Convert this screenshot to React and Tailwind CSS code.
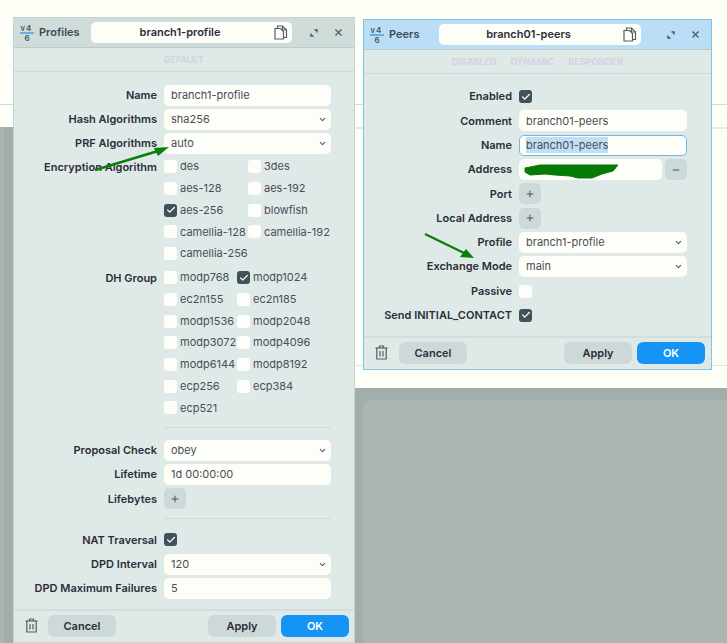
import { ChevronDown, X, Plus, Minus, Check } from 'lucide-react'
import clsx from 'clsx'

const LABEL_W = {
  profiles: 'w-[143px]',
  peers: 'w-[148px]',
}

function VersionIcon() {
  return (
    <svg width="14" height="18" viewBox="0 0 14 18" className="shrink-0">
      <text x="0.5" y="7" fontSize="7.5" fontWeight="600" fontFamily="Inter" fill="#46565c">v</text>
      <text x="6" y="6.5" fontSize="8" fontWeight="600" fontFamily="Inter" fill="#46565c">4</text>
      <line x1="0" y1="9" x2="14" y2="9" stroke="#3d9be0" strokeWidth="1.4" />
      <text x="4.5" y="17" fontSize="8" fontWeight="600" fontFamily="Inter" fill="#46565c">6</text>
    </svg>
  )
}

function CopyIcon() {
  return (
    <svg width="14" height="15" viewBox="0 0 14 15" fill="none" stroke="#50605f" strokeWidth="1.2" className="shrink-0">
      <path d="M3.5 3V1h5l4 4v7.5h-3" />
      <path d="M8.5 1v4h4" />
      <path d="M1 3.5h5.5l3 3v7.5H1z" fill="#fdfef8" />
    </svg>
  )
}

function ExpandIcon() {
  return (
    <svg width="8" height="8" viewBox="0 0 8 8" fill="none" stroke="#46565c" strokeWidth="1.4" className="shrink-0">
      <path d="M4.5 1H7v2.5" />
      <path d="M3.5 7H1V4.5" />
    </svg>
  )
}

function TrashIcon() {
  return (
    <svg width="13" height="15" viewBox="0 0 13 15" fill="none" stroke="#50605f" strokeWidth="1.2" className="shrink-0">
      <path d="M0.5 3h12" />
      <path d="M4.5 3V1h4v2" />
      <path d="M1.8 3v11h9.4V3" />
      <path d="M5 6v5.5M8 6v5.5" />
    </svg>
  )
}

function TextField({ value, focused, className }) {
  return (
    <div className={clsx(
      'h-[21px] rounded-[5px] bg-[#fdfef8] flex items-center px-[7px] text-[#4b4d58] text-[11px]',
      focused && 'border border-[#74b6e6] pl-[6px]',
      className || 'flex-1'
    )}>
      {focused ? <span className="bg-[#c0dff5]">{value}</span> : value}
    </div>
  )
}

function SelectField({ value }) {
  return (
    <div className="flex-1 h-[21px] rounded-[5px] bg-[#fdfef8] flex items-center justify-between pl-[7px] pr-[4px] text-[#4b4d58] text-[11px]">
      {value}
      <ChevronDown size={9} strokeWidth={2.8} className="text-[#4f5c60]" />
    </div>
  )
}

function Box({ checked }) {
  return checked ? (
    <span className="w-[13px] h-[13px] rounded-[3px] bg-[#3f5259] flex items-center justify-center shrink-0">
      <Check size={10} strokeWidth={3} className="text-white" />
    </span>
  ) : (
    <span className="w-[13px] h-[13px] rounded-[3px] bg-[#fdfef8] shrink-0" />
  )
}

function SquareBtn({ minus }) {
  return (
    <div className="w-[22px] h-[21px] rounded-[5px] bg-[#cdd9d8] flex items-center justify-center text-[#46565c] shrink-0">
      {minus ? <Minus size={10} strokeWidth={2.4} /> : <Plus size={10} strokeWidth={2.4} />}
    </div>
  )
}

function Row({ label, labelW, control, h = 'h-[24.3px]', className }) {
  return (
    <div className={clsx('flex items-center gap-[7px]', h, className)}>
      <div className={clsx('text-right text-[11px] font-semibold text-[#2c2d38] whitespace-nowrap shrink-0', labelW)}>{label}</div>
      {control}
    </div>
  )
}

function CheckGrid({ label, labelW, firstW, items, className }) {
  return (
    <div className={clsx('flex gap-[7px]', className)}>
      <div className={clsx('text-right text-[11px] font-semibold text-[#2c2d38] whitespace-nowrap shrink-0 leading-[21.7px] pt-[1px]', labelW)}>{label}</div>
      <div className="flex-1 flex flex-col">
        {items.map((row, i) => (
          <div key={i} className="flex items-center h-[21.7px]">
            {row.map((it, j) => (
              <div key={it.n} className={clsx('flex items-center gap-[3px] text-[11px] text-[#4b4d58] whitespace-nowrap', j === 0 && firstW)}>
                <Box checked={it.c} />
                {it.n}
              </div>
            ))}
          </div>
        ))}
      </div>
    </div>
  )
}

function Footer({ cancelGap, right }) {
  return (
    <div className={clsx('h-[33px] border-t-2 border-[#d2dddc] flex items-start pt-[4px] pl-[11px]', right)}>
      <div className="mt-[3px]"><TrashIcon /></div>
      <button className={clsx('w-[68px] h-[22px] rounded-[6px] bg-[#cdd9d8] text-[11px] font-semibold text-[#2c2d38]', cancelGap)}>Cancel</button>
      <div className="flex-1" />
      <button className="w-[68px] h-[22px] rounded-[6px] bg-[#cdd9d8] text-[11px] font-semibold text-[#2c2d38]">Apply</button>
      <button className="w-[68px] h-[22px] rounded-[6px] bg-[#1694f5] text-[11px] font-semibold text-white ml-[5px]">OK</button>
    </div>
  )
}

function TitleBar({ title, name, barClass, titleW, nameClass, expandGap }) {
  return (
    <div className={clsx('h-[30px] flex items-center border-b border-[#b9cbca] shrink-0', barClass)}>
      <div className="ml-[6px] mr-[5px]"><VersionIcon /></div>
      <span className={clsx('text-[11px] font-semibold text-[#3d4a55]', titleW)}>{title}</span>
      <div className={clsx('h-[21px] rounded-[5px] bg-[#fdfef8] flex items-center pr-[4px] text-[11px] font-semibold text-[#2c2d38]', nameClass)}>
        <span className="flex-1 text-center pr-[5px]">{name}</span>
        <CopyIcon />
      </div>
      <div className={expandGap}><ExpandIcon /></div>
      <X size={11} strokeWidth={2.4} className="ml-[15px] text-[#46565c]" />
    </div>
  )
}

function Badges({ labels }) {
  return (
    <div className="h-[24px] border-b border-[#cbd9d8] flex items-center justify-center gap-[14px] text-[9px] font-bold text-[#d5d1e2] shrink-0">
      {labels.map(l => <span key={l}>{l}</span>)}
    </div>
  )
}

function ProfilesWindow() {
  const lw = LABEL_W.profiles
  const enc = [
    [{ n: 'des' }, { n: '3des' }],
    [{ n: 'aes-128' }, { n: 'aes-192' }],
    [{ n: 'aes-256', c: true }, { n: 'blowfish' }],
    [{ n: 'camellia-128' }, { n: 'camellia-192' }],
    [{ n: 'camellia-256' }],
  ]
  const dh = [
    [{ n: 'modp768' }, { n: 'modp1024', c: true }],
    [{ n: 'ec2n155' }, { n: 'ec2n185' }],
    [{ n: 'modp1536' }, { n: 'modp2048' }],
    [{ n: 'modp3072' }, { n: 'modp4096' }],
    [{ n: 'modp6144' }, { n: 'modp8192' }],
    [{ n: 'ecp256' }, { n: 'ecp384' }],
    [{ n: 'ecp521' }],
  ]
  return (
    <div className="absolute left-[13px] top-[17px] w-[342px] h-[626px] bg-[#dfe9e8] border border-[#c5d3d2] flex flex-col">
      <TitleBar title="Profiles" name="branch1-profile" barClass="bg-[#cfdcda]" titleW="w-[52px]" nameClass="w-[201px]" expandGap="ml-[18px]" />
      <Badges labels={['DEFAULT']} />
      <div className="flex-1 pt-[11px] pr-[23px]">
        <Row label="Name" labelW={lw} control={<TextField value="branch1-profile" />} />
        <Row label="Hash Algorithms" labelW={lw} control={<SelectField value="sha256" />} />
        <Row label="PRF Algorithms" labelW={lw} control={<SelectField value="auto" />} />
        <CheckGrid label="Encryption Algorithm" labelW={lw} firstW="w-[84px]" items={enc} />
        <CheckGrid label="DH Group" labelW={lw} firstW="w-[73px]" items={dh} className="mt-[2.5px]" />
        <div className="ml-[150px] h-px bg-[#cfdbda] mt-[8.5px] mb-[10px]" />
        <Row label="Proposal Check" labelW={lw} control={<SelectField value="obey" />} />
        <Row label="Lifetime" labelW={lw} control={<TextField value="1d 00:00:00" />} />
        <Row label="Lifebytes" labelW={lw} control={<SquareBtn />} />
        <div className="ml-[150px] h-px bg-[#cfdbda] mt-[7px] mb-[8.7px]" />
        <Row label="NAT Traversal" labelW={lw} control={<Box checked />} />
        <Row label="DPD Interval" labelW={lw} control={<SelectField value="120" />} />
        <Row label="DPD Maximum Failures" labelW={lw} control={<TextField value="5" />} />
      </div>
      <Footer cancelGap="ml-[10px]" right="pr-[5px]" />
    </div>
  )
}

function PeersWindow() {
  const lw = LABEL_W.peers
  return (
    <div className="absolute left-[363px] top-[19px] w-[349px] h-[351px] bg-[#dfe9e8] border border-[#7fc4ec] flex flex-col">
      <TitleBar title="Peers" name="branch01-peers" barClass="bg-[#b9def5]" titleW="w-[50px]" nameClass="w-[202px]" expandGap="ml-[26px]" />
      <Badges labels={['DISABLED', 'DYNAMIC', 'RESPONDER']} />
      <div className="flex-1 pt-[10.5px] pr-[24px]">
        <Row label="Enabled" labelW={lw} control={<Box checked />} />
        <Row label="Comment" labelW={lw} control={<TextField value="branch01-peers" />} />
        <Row label="Name" labelW={lw} control={<TextField value="branch01-peers" focused />} />
        <Row label="Address" labelW={lw} control={
          <div className="flex-1 flex gap-[3px]">
            <TextField value="" />
            <SquareBtn minus />
          </div>
        } />
        <Row label="Port" labelW={lw} control={<SquareBtn />} />
        <Row label="Local Address" labelW={lw} control={<SquareBtn />} />
        <Row label="Profile" labelW={lw} control={<SelectField value="branch1-profile" />} />
        <Row label="Exchange Mode" labelW={lw} control={<SelectField value="main" />} />
        <Row label="Passive" labelW={lw} control={<Box />} />
        <Row label="Send INITIAL_CONTACT" labelW={lw} control={<Box checked />} />
      </div>
      <Footer cancelGap="ml-[11px]" right="pr-[6px]" />
    </div>
  )
}

// green marker scribbles someone drew over the screenshot
function Annotations() {
  return (
    <svg width="727" height="643" className="absolute inset-0 pointer-events-none">
      <line x1="95" y1="170" x2="158" y2="151" stroke="#068006" strokeWidth="2.4" />
      <path d="M169 147L154 148L158 156Z" fill="#068006" />
      <line x1="425" y1="234" x2="464" y2="253" stroke="#068006" strokeWidth="2.4" />
      <path d="M474 258L460 257L466 249Z" fill="#068006" />
      <path d="M525 168L540 165L618 165L613 171L602 174L592 178L578 178L570 176L555 175L545 174L530 175L525 172Z" fill="#067a06" stroke="#067a06" strokeWidth="1" />
    </svg>
  )
}

export default function App() {
  return (
    <div className="relative w-[727px] h-[643px] overflow-hidden bg-[#fdfef6] font-['Inter',sans-serif]">
      <div className="h-[104px]" />
      <div className="h-px bg-[#cfdcdc]" />
      <div className="h-[22px]" />
      <div className="flex h-[516px]">
        <div className="w-[4px] bg-[#abb5b2]" />
        <div className="w-[350px] bg-[#a3adaa]" />
        <div className="flex-1 flex flex-col">
          <div className="h-[238px] border-t-2 border-[#e8ebe4]" />
          <div className="h-px bg-[#dfe5e0]" />
          <div className="h-[22px]" />
          <div className="flex-1 bg-[#a3adaa] pt-[12px] pl-[9px]">
            <div className="h-full rounded-tl-[10px] bg-[#abb5b2]" />
          </div>
        </div>
      </div>
      <ProfilesWindow />
      <PeersWindow />
      <Annotations />
    </div>
  )
}
